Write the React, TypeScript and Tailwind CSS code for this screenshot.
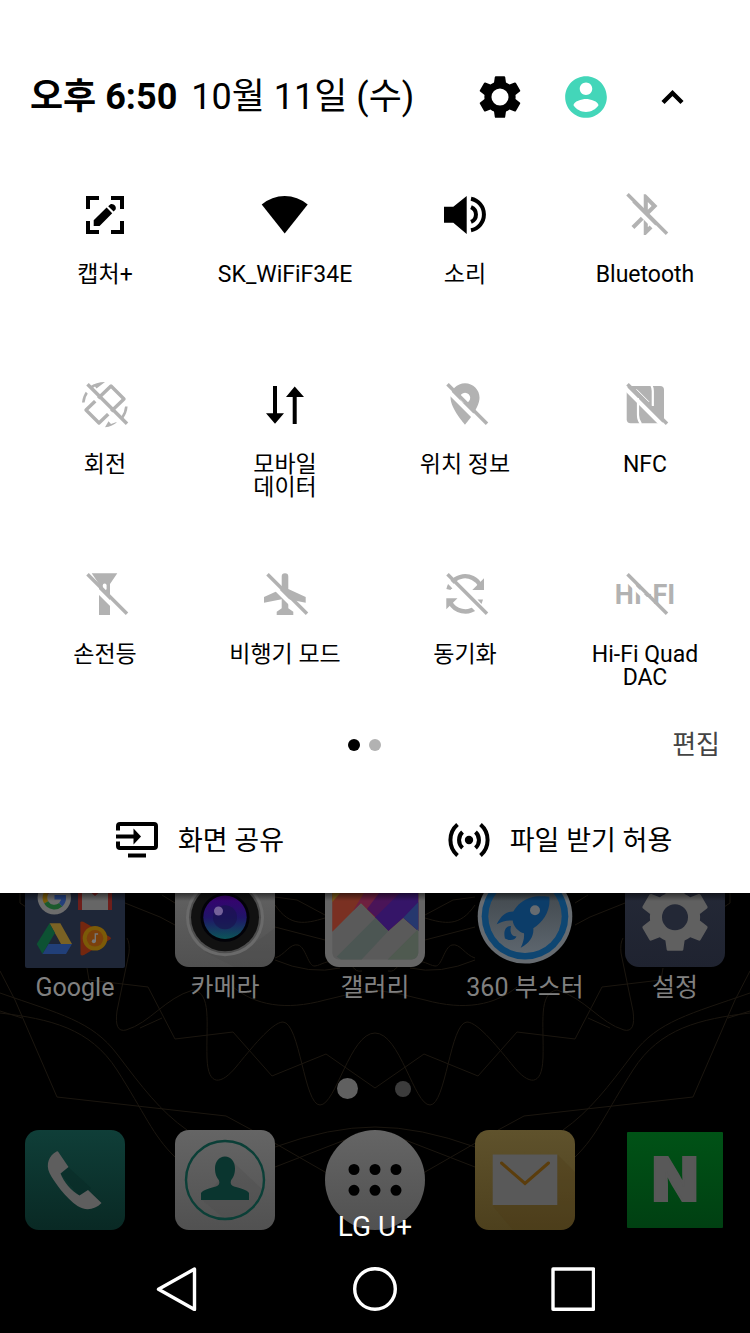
import type { ReactNode } from "react"

const GEAR =
  "M19.43 12.98c.04-.32.07-.64.07-.98s-.03-.66-.07-.98l2.11-1.65c.19-.15.24-.42.12-.64l-2-3.46c-.12-.22-.39-.3-.61-.22l-2.49 1c-.52-.4-1.08-.73-1.69-.98l-.38-2.65C14.46 2.18 14.25 2 14 2h-4c-.25 0-.46.18-.49.42l-.38 2.65c-.61.25-1.17.59-1.69.98l-2.49-1c-.23-.09-.49 0-.61.22l-2 3.46c-.13.22-.07.49.12.64l2.11 1.65c-.04.32-.07.65-.07.98s.03.66.07.98l-2.11 1.65c-.19.15-.24.42-.12.64l2 3.46c.12.22.39.3.61.22l2.49-1c.52.4 1.08.73 1.69.98l.38 2.65c.03.24.24.42.49.42h4c.25 0 .46-.18.49-.42l.38-2.65c.61-.25 1.17-.59 1.69-.98l2.49 1c.23.09.49 0 .61-.22l2-3.46c.12-.22.07-.49-.12-.64l-2.11-1.65z"

const PERSON =
  "M12 2C6.48 2 2 6.48 2 12s4.48 10 10 10 10-4.48 10-10S17.52 2 12 2zm0 3c1.66 0 3 1.34 3 3s-1.34 3-3 3-3-1.34-3-3 1.34-3 3-3zm0 14.2c-2.5 0-4.71-1.28-6-3.22.03-1.99 4-3.08 6-3.08 1.99 0 5.97 1.09 6 3.08-1.29 1.94-3.5 3.22-6 3.22z"

type Tile = {
  label: string
  on?: boolean
  icon: ReactNode
}

const tiles: Tile[] = [
  {
    label: "캡처+",
    on: true,
    icon: (
      <>
        <path d="M15 27V16h11M38 16h11v11M49 39v11H38M26 50H15V39" fill="none" stroke="currentColor" strokeWidth="4" />
        <path d="M20.7 38.2 33.6 25.6l5.6 5.6-12.6 12.8h-5.9zM35.2 24.2l2-1.8c3-1.4 6.8 2 5.4 5.2l-2 2z" />
      </>
    ),
  },
  {
    label: "SK_WiFiF34E",
    on: true,
    icon: <path d="M31.7 51.5 8.7 22.4A36 36 0 0 1 54.7 22.4z" />,
  },
  {
    label: "소리",
    on: true,
    icon: (
      <>
        <path d="M11 24.7h9.3L33.7 14v38L20.3 40.7H11z" />
        <path d="M38 16.8A16 16 0 0 1 38 48.2M38 25.1A8 8 0 0 1 38 39.900" fill="none" stroke="currentColor" strokeWidth="4" />
      </>
    ),
  },
  {
    label: "Bluetooth",
    icon: (
      <path
        transform="translate(8.3 8.2) scale(2.04)"
        d="M17.71 7.71 12 2h-1v7.59L6.41 5 5 6.41 10.59 12 5 17.59 6.41 19 11 14.41V22h1l5.71-5.71-4.3-4.29zM13 5.83l1.88 1.88L13 9.59zm1.88 10.46L13 18.17v-3.76z"
      />
    ),
  },
  {
    label: "회전",
    icon: (
      <>
        <path d="M38 14 51 27 26 51 13 38z" fill="none" stroke="currentColor" strokeWidth="3.4" strokeLinejoin="round" />
        <path d="M14.5 19.5A22 22 0 0 0 10.3 30.5M53.3 34.5a22 22 0 0 1-4 11" fill="none" stroke="currentColor" strokeWidth="2.6" />
        <path d="M17 14.5c4-3 9-4.5 15-4.500l-8.5 6.5-1.5-2-3 2zM32 55.2l3.5-6 2.5 2.8 7-2.5c-4 3.5-8 5.5-13 5.7z" />
      </>
    ),
  },
  {
    label: "모바일\n데이터",
    on: true,
    icon: <path d="M20 14h4v27.3h7L22 51.7 13 41.3h7zM41.7 14.5 51 25h-7.3v27h-4V25H33z" />,
  },
  {
    label: "위치 정보",
    icon: (
      <path
        transform="translate(7.2 7.2) scale(2.07)"
        d="M12 2C8.13 2 5 5.13 5 9c0 5.25 7 13 7 13s7-7.75 7-13c0-3.87-3.13-7-7-7zm0 9.5a2.5 2.5 0 0 1 0-5 2.5 2.5 0 0 1 0 5z"
      />
    ),
  },
  {
    label: "NFC",
    icon: (
      <>
        <rect x="13.7" y="14" width="37.3" height="37.3" rx="4" />
        <path d="M25 26v17q0 5 3 9M39.8 34V19q0-3-1.5-6" fill="none" stroke="#fff" strokeWidth="2.2" />
        <path d="M23.5 17.3 36 29.8" stroke="#fff" strokeWidth="1" />
      </>
    ),
  },
  {
    label: "손전등",
    icon: (
      <>
        <path d="M18.7 11.3h25.6L37 22v31H26V22z" />
        <rect x="29.8" y="21.5" width="3.8" height="7" rx="1.9" fill="#fff" />
      </>
    ),
  },
  {
    label: "비행기 모드",
    icon: (
      <path d="M28.7 14.5a3.3 3.3 0 0 1 6.6 0V27l17.4 8v5.7L35.3 37.3v9l5 3.4V53H23.7v-3.3l5-3.4v-9L11 40.7V35l17.7-8z" />
    ),
  },
  {
    label: "동기화",
    icon: (
      <>
        <path d="M15.5 27.5a17 17 0 0 1 31.5-4.5M17 40a17 17 0 0 0 26 5.5" fill="none" stroke="currentColor" strokeWidth="4.4" />
        <path d="M51 16.3V28H39.3zM13.3 36.3h11.2l-11.2 11zM44.5 37.500h5.500l-1.500 4.500zM14.500 27l2.500-5 2.500 5z" />
      </>
    ),
  },
  {
    label: "Hi-Fi Quad\nDAC",
    icon: (
      <text x="32" y="42" textAnchor="middle" fontSize="27" fontWeight="700">
        HI-FI
      </text>
    ),
  },
]

const QuickTile = ({ label, on, icon }: Tile) => (
  <button type="button" aria-pressed={!!on} className="flex flex-col items-center">
    <svg viewBox="0 0 64 64" className={`size-16 fill-current ${on ? "text-black" : "text-[#b2b2b2]"}`}>
      {icon}
      {!on && (
        <>
          <path d="M11.5 15.5 51 55" stroke="#fff" strokeWidth="4" />
          <path d="M14.5 12.3 54 51.8" stroke="currentColor" strokeWidth="3.6" />
        </>
      )}
    </svg>
    <span className="mt-[17px] whitespace-pre-line text-[23px] leading-[23px]">{label}</span>
  </button>
)

const GoogleIcon = () => (
  <>
    <rect width="100" height="100" rx="2" fill="#1e2637" />
    <circle cx="29.3" cy="29.7" r="16.7" fill="#6c6c6c" />
    <g fill="none" strokeWidth="4.6">
      <path d="M36.5 23A9.500 9.500 0 0 0 21.2 25" stroke="#7a231b" />
      <path d="M21.200 25a9.500 9.500 0 0 0 0 9.400" stroke="#7a5a08" />
      <path d="M21.200 34.400a9.500 9.500 0 0 0 14.500 2.400" stroke="#1b5a2c" />
      <path d="M35.700 36.800a9.500 9.500 0 0 0 3-7.600H29.500" stroke="#233f7a" />
    </g>
    <path d="M53 10h34v32H53z" fill="#666" />
    <path d="M53 42V14h4v28zM83 42V14h4v28zM57 10l13 11 13-11v7L70 28 57 17z" fill="#6e1f1b" />
    <path d="M24.5 55.3h10.8L47 76H36z" fill="#7a6224" />
    <path d="M24.5 55.3 30 65 17.5 86 11.7 76z" fill="#0d5233" />
    <path d="M23.5 76H47l-6 10H17.5z" fill="#213f78" />
    <path d="M55.3 54q1-1 3-.2L85 69q2 1.3 0 2.6L59 87q-2.5 1-3.5-.5z" fill="#74270f" />
    <circle cx="70" cy="70.3" r="12.3" fill="#7c5a08" />
    <circle cx="70" cy="70.3" r="8.3" fill="#7b400c" />
    <circle cx="68.8" cy="73.3" r="2" fill="#777" />
    <path d="M70.3 73.5V66h2.8" fill="none" stroke="#777" strokeWidth="1.4" />
  </>
)

const CameraIcon = () => (
  <>
    <rect width="100" height="99" rx="14" fill="url(#plate)" />
    <path d="M77 77 100 60v25q-1 12-13 14H60L30 84z" fill="#4a4a4a" opacity="0.3" />
    <circle cx="50" cy="49.3" r="39" fill="#6a6a6a" />
    <circle cx="50" cy="49.3" r="36" fill="#4d4d4d" />
    <circle cx="50" cy="49.3" r="34" fill="#111" />
    <circle cx="50" cy="49.3" r="24.5" fill="#020208" />
    <circle cx="50" cy="49.3" r="21.7" fill="url(#lens)" />
    <circle cx="50" cy="49.3" r="12" fill="#1a1450" opacity="0.7" />
    <circle cx="43.5" cy="43" r="4.5" fill="#75629a" />
  </>
)

const GalleryIcon = () => (
  <>
    <rect width="100" height="99" rx="14" fill="#656565" />
    <path d="M7.3 0h86v85q-1 6-7 6.5H14q-6-.5-6.7-6.5z" fill="#5a5a5a" />
    <path d="M7.3 0h86v63L78.3 49.7 63.3 63 36 35 7.3 63.7z" fill="#7a3022" />
    <path d="M7.3 24h9L7.3 34z" fill="#7a5a18" />
    <path d="M42 20h50L60 58 36 35l-8 8z" fill="#6e2040" />
    <path d="M58 20h35L60 58 42 41z" fill="#4a1458" />
    <path d="M93.3 20v43L78.3 49.7 63.3 63 50 49.5 80 20z" fill="#351568" />
    <path d="M93.3 34v29L78.3 49.7z" fill="#26386e" />
    <path d="M11.7 88.7 50.5 49.8 63.3 63 36.7 91.5H16z" fill="#4c5653" />
    <path d="M62.7 91.5 93.3 61v24q-1 6-7 6.5z" fill="#4f5a50" />
  </>
)

const BoosterIcon = () => (
  <>
    <circle cx="50" cy="48.3" r="47.3" fill="#666b70" />
    <circle cx="50" cy="48.3" r="43.3" fill="#0e4672" />
    <circle cx="50" cy="48.3" r="36.7" fill="url(#booster)" />
    <path
      d="M74.3 28.7C66 28 60 28 56 29.5 48 32 42 37 38.3 43.5 32 43.5 27 46 21.7 56.3 27 53.5 32 52 37.7 52.5 38 58 44 64.5 49 65.3 49.5 70 48 75 45.7 79.7 55 75 59 68 58.3 60.3 68 54 76 43 74.3 28.7z"
      fill="#0c3d69"
    />
    <circle cx="60" cy="42.3" r="5" fill="#666b70" />
    <path d="M36 58c-5-.5-8 5-6 12.5 4 2.5 10 2 11.5-2-5 0-7-4-5.5-10.5z" fill="#0c3d69" />
  </>
)

const SettingsIcon = () => (
  <>
    <rect width="100" height="99" rx="14" fill="url(#navy)" />
    <path d={GEAR} transform="translate(9.8 9.1) scale(3.35)" fill="#606060" />
    <circle cx="50" cy="49.3" r="13" fill="#232836" />
  </>
)

const apps = [
  { label: "Google", icon: <GoogleIcon /> },
  { label: "카메라", icon: <CameraIcon /> },
  { label: "갤러리", icon: <GalleryIcon /> },
  { label: "360 부스터", icon: <BoosterIcon /> },
  { label: "설정", icon: <SettingsIcon /> },
]

const dock = [
  {
    label: "전화",
    icon: (
      <>
        <rect width="100" height="100" rx="14" fill="url(#teal)" />
        <path d="M43 37 66 58 63 62 54 65 36 44z" fill="#072a25" opacity="0.5" />
        <path
          d="M31.5 21.5q1-.5 1.5 0L43.5 37l-8 6.5C39 52 46 61 54.5 65.5L63 60 76.5 73C70 80 60 81 52.5 76 41 68 29 52 24.5 43 20.5 34 24 25.5 31.5 21.5z"
          fill="#5e5e5e"
        />
      </>
    ),
  },
  {
    label: "연락처",
    icon: (
      <>
        <rect width="100" height="100" rx="14" fill="url(#plate)" />
        <path d="M59 33 88 60 74 83 50 89 27 70z" fill="#4b4b4b" opacity="0.3" />
        <circle cx="50" cy="50" r="39" fill="none" stroke="#0b3f37" strokeWidth="2.4" />
        <path
          d="M50 26.5c6 0 10 5 10 12 0 6-2 9-4 12-1 3 0 5 3 6 8 2 13 3.5 15 6.5v7H26v-7c2-3 7-4.5 15-6.5 3-1 4-3 3-6-2-3-4-6-4-12 0-7 4-12 10-12z"
          fill="#0a352f"
        />
      </>
    ),
  },
  {
    label: "앱 목록",
    icon: (
      <>
        <circle cx="50" cy="50" r="50" fill="url(#plate)" />
        <path d="M29 39.5h.01M50 39.5h.01M71 39.5h.01M29 60.3h.01M50 60.3h.01M71 60.3h.01" stroke="#000" strokeWidth="11" strokeLinecap="round" />
      </>
    ),
  },
  {
    label: "이메일",
    icon: (
      <>
        <rect width="100" height="100" rx="14" fill="url(#gold)" />
        <path d="M83 25 100 42v46q-3 11-14 12H38L18 76z" fill="#4c3913" opacity="0.25" />
        <path d="M17.7 24.5h64.6V75H17.7z" fill="#595959" />
        <path d="M26.5 33 50 53.5 73.5 33" fill="none" stroke="#5b3d0c" strokeWidth="3" strokeLinecap="round" />
      </>
    ),
  },
  {
    label: "네이버",
    icon: (
      <>
        <rect x="2" y="2" width="96" height="96" rx="1" fill="url(#green)" />
        <text
          x="50"
          y="71"
          textAnchor="middle"
          fontSize="60"
          fontWeight="900"
          className="font-[Inter]"
          fill="#585858"
          stroke="#585858"
          strokeWidth="2"
        >
          N
        </text>
      </>
    ),
  },
]

// One side of the line pattern, drawn again as its own mirror image
const WallpaperHalf = () => (
  <>
    <path d="M0 78 15 107 57 204 226 223 250 236 325 279 375 307" />
    <path d="M0 100C60 121 92 128 117 161S160 218 187 237" />
    <path d="M0 120C50 126 90 135 117 177S153 243 175 264" />
    <path d="M127 45Q130 50 129 60L117 118Q114 140 126 137C150 130 165 105 193 97 212 100 206 130 207 165 208 195 222 191 236 174S272 129 283 129C300 130 304 212 320 212S350 140 375 140" />
    <path d="M87 75 89 87 148 94 175 146 233 139 272 183 326 161 375 195" />
    <path d="M233 94C255 112 285 118 325 107Q350 100 375 97" />
    <path d="M125 10 160 24 175 32M162 2 175 10M275 34 325 47M275 12C290 34 305 31 325 25M275 4 297 7 325 22" />
    <path d="M275 65C285 62 290 50 298 52S308 74 315 73 325 67 340 68 352 80 362 78M275 67Q310 82 340 75" />
    <path d="M275 254Q330 234 375 234M275 274 350 245M20 0V10L26 14M162 125 140 135M0 118 22 125" />
  </>
)

const Wallpaper = () => (
  <svg viewBox="0 0 750 440" preserveAspectRatio="xMidYMin slice" className="absolute inset-0 size-full" fill="none" stroke="#1b160f">
    <defs>
      <linearGradient id="plate" x1="0" y1="0" x2="0" y2="1">
        <stop offset="0" stopColor="#656565" />
        <stop offset="1" stopColor="#515151" />
      </linearGradient>
      <linearGradient id="lens" x1="0" y1="0" x2="0" y2="1">
        <stop offset="0" stopColor="#3a0070" />
        <stop offset="0.5" stopColor="#201468" />
        <stop offset="1" stopColor="#0b5558" />
      </linearGradient>
      <linearGradient id="booster" x1="0" y1="0" x2="0" y2="1">
        <stop offset="0" stopColor="#3c4247" />
        <stop offset="1" stopColor="#5d666e" />
      </linearGradient>
      <linearGradient id="navy" x1="0" y1="0" x2="0" y2="1">
        <stop offset="0" stopColor="#252a38" />
        <stop offset="1" stopColor="#1f2330" />
      </linearGradient>
      <linearGradient id="teal" x1="0" y1="0" x2="0" y2="1">
        <stop offset="0" stopColor="#0f3e38" />
        <stop offset="1" stopColor="#092924" />
      </linearGradient>
      <linearGradient id="gold" x1="0" y1="0" x2="0" y2="1">
        <stop offset="0" stopColor="#5f522c" />
        <stop offset="1" stopColor="#4d401d" />
      </linearGradient>
      <linearGradient id="green" x1="0" y1="0" x2="0" y2="1">
        <stop offset="0" stopColor="#005216" />
        <stop offset="1" stopColor="#004012" />
      </linearGradient>
    </defs>
    <WallpaperHalf />
    <g transform="translate(750 0) scale(-1 1)">
      <WallpaperHalf />
    </g>
  </svg>
)

const QuickPanel = () => (
  <section className="bg-white pt-[72px] pb-[29px] text-black">
    <header className="flex h-[50px] items-center pr-[53px] pl-[30px]">
      <h1 className="flex-1 whitespace-nowrap text-[36px] leading-[50px]">
        <span className="font-bold">오후 6:50</span>
        <span className="ml-3.5">10월 11일 (수)</span>
      </h1>
      <div className="flex items-center gap-9">
        <button type="button" aria-label="설정">
          <svg viewBox="0 0 24 24" className="size-[50px]">
            <path d={GEAR} />
            <circle cx="12" cy="12" r="4.1" fill="#fff" />
          </svg>
        </button>
        <button type="button" aria-label="사용자">
          <svg viewBox="0 0 24 24" className="size-[50px] fill-[#43d6b9]">
            <path d={PERSON} />
          </svg>
        </button>
        <button type="button" aria-label="접기">
          <svg viewBox="0 0 50 50" className="size-[50px]" fill="none" stroke="#000" strokeWidth="4.4">
            <path d="M16 30.5 25.5 21 35 30.5" />
          </svg>
        </button>
      </div>
    </header>

    <div className="mt-[60px] grid auto-rows-[127px] grid-cols-4 gap-y-[63px] px-[15px]">
      {tiles.map((tile) => (
        <QuickTile key={tile.label} {...tile} />
      ))}
    </div>

    <div className="mt-9 grid h-10 grid-cols-3 items-center px-[30px]">
      <div className="col-start-2 flex justify-center gap-[9px] pr-[22px]">
        <span className="size-3 rounded-full bg-black" />
        <span className="size-3 rounded-full bg-[#b2b2b2]" />
      </div>
      <button type="button" className="justify-self-end text-[26px] leading-10 text-[#444]">
        편집
      </button>
    </div>

    <div className="mt-[51px] grid h-12 grid-cols-[5fr_4fr] pr-[30px]">
      <button type="button" className="flex items-center justify-center gap-5 text-[27px]">
        <svg viewBox="0 0 42 42" className="size-[42px]" fill="none" stroke="#000" strokeWidth="4">
          <path d="M2 11.500V7q0-2 2-2h34q2 0 2 2v20q0 2-2 2H4q-2 0-2-2v-4.500" />
          <path d="M0 17.500h18" />
          <path d="M17.500 9.500 25 17.500l-7.500 8z" fill="#000" stroke="none" />
          <path d="M12 36.500h18" />
        </svg>
        <span className="pt-0.5">화면 공유</span>
      </button>
      <button type="button" className="flex items-center justify-center gap-5 text-[27px]">
        <svg viewBox="0 0 42 42" className="size-[42px]" fill="none" stroke="#000" strokeWidth="4">
          <circle cx="21" cy="21" r="4.2" fill="#000" stroke="none" />
          <path d="M14.500 13a11 11 0 0 0 0 16M27.500 13a11 11 0 0 1 0 16M9.500 5.500a20.500 20.500 0 0 0 0 31M32.500 5.500a20.500 20.500 0 0 1 0 31" />
        </svg>
        <span className="pt-0.5">파일 받기 허용</span>
      </button>
    </div>
  </section>
)

const HomeScreen = () => (
  <section className="relative flex-1 bg-black pb-[22px]">
    <Wallpaper />
    <div className="relative">
      <div className="grid grid-cols-5">
        {apps.map((app) => (
          <button key={app.label} type="button" className="flex flex-col items-center">
            <span className="flex h-[75px] items-end overflow-hidden">
              <svg viewBox="0 0 100 100" className="size-[100px]">
                {app.icon}
              </svg>
            </span>
            <span className="mt-1 text-[25px] leading-8 text-[#808080]">{app.label}</span>
          </button>
        ))}
      </div>

      <div className="mt-[74px] flex h-[21px] items-center justify-center gap-[37px] pr-[2px]">
        <span className="size-[21px] rounded-full bg-[#606060]" />
        <span className="size-4 rounded-full bg-[#3c3c3c]" />
      </div>

      <div className="relative mt-[31px] grid grid-cols-5 justify-items-center">
        {dock.map((app) => (
          <button key={app.label} type="button" aria-label={app.label}>
            <svg viewBox="0 0 100 100" className="size-[100px]">
              {app.icon}
            </svg>
          </button>
        ))}
        <p className="absolute inset-x-0 top-[81px] text-center text-[28px] leading-8 text-white">LG U+</p>
      </div>

      <nav className="mt-[37px] flex justify-center gap-[154px]">
        <button type="button" aria-label="뒤로">
          <svg viewBox="0 0 44 44" className="size-11" fill="none" stroke="#fff" strokeWidth="3.4" strokeLinejoin="round">
            <path d="M39.500 2v40.500L3.500 22.300z" />
          </svg>
        </button>
        <button type="button" aria-label="홈">
          <svg viewBox="0 0 44 44" className="size-11" fill="none" stroke="#fff" strokeWidth="3.4">
            <circle cx="22" cy="22" r="20.3" />
          </svg>
        </button>
        <button type="button" aria-label="최근 앱">
          <svg viewBox="0 0 44 44" className="size-11" fill="none" stroke="#fff" strokeWidth="3.4" strokeLinejoin="round">
            <path d="M2 2h40.500v40.300H2z" />
          </svg>
        </button>
      </nav>
    </div>
    {/* shade cast by the panel above */}
    <div className="pointer-events-none absolute inset-x-0 top-0 h-2 bg-linear-to-b from-black/50 to-transparent" />
  </section>
)

const App = () => (
  <main className="flex min-h-screen flex-col font-[Roboto,'Noto_Sans_CJK_KR',sans-serif]" lang="ko">
    <QuickPanel />
    <HomeScreen />
  </main>
)

export default App
